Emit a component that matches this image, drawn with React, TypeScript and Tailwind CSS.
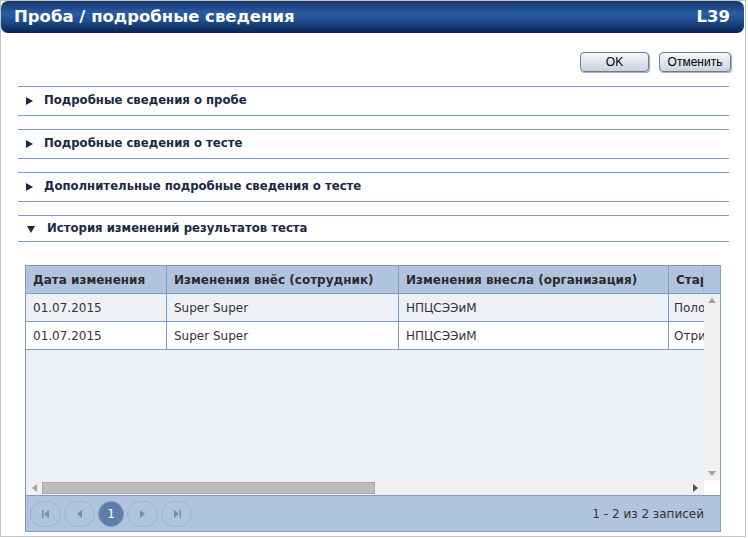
import type { ReactNode } from "react"

const sections = [
  { title: "Подробные сведения о пробе", open: false },
  { title: "Подробные сведения о тесте", open: false },
  { title: "Дополнительные подробные сведения о тесте", open: false },
  { title: "История изменений результатов теста", open: true },
]

const rows = [
  { date: "01.07.2015", user: "Super Super", org: "НПЦСЭЭиМ", old: "Положительный" },
  { date: "01.07.2015", user: "Super Super", org: "НПЦСЭЭиМ", old: "Отрицательный" },
]

function PagerButton({ children }: { children: ReactNode }) {
  return (
    <div className="w-[31px] h-[26px] rounded-full border border-[#9db3d3] flex items-center justify-center">
      {children}
    </div>
  )
}

function SectionHeader({ title, open }: { title: string; open: boolean }) {
  return (
    <div
      className={`ml-[17px] mr-[16px] border-y border-[#7f9cc9] flex items-center ${
        open ? "h-[27px]" : "h-[30px]"
      }`}
    >
      {open ? (
        <svg width="8" height="8" viewBox="0 0 8 8" className="ml-[9px] mr-[12px]">
          <path d="M0 1 L8 1 L4 8 Z" fill="#1c2640" />
        </svg>
      ) : (
        <svg width="7" height="8" viewBox="0 0 7 8" className="ml-[8px] mr-[11px]">
          <path d="M0 0 L7 4 L0 8 Z" fill="#1c2640" />
        </svg>
      )}
      <span className="text-[11.7px] font-bold text-[#1b2846]">{title}</span>
    </div>
  )
}

export default function App() {
  return (
    <div className="w-[748px] h-[538px] bg-white overflow-hidden" style={{ fontFamily: "'DejaVu Sans', Verdana, sans-serif" }}>
      <div className="w-[746px] h-[537px] border border-[#c4c4c4] flex flex-col">
        {/* title bar */}
        <div className="h-[32px] mr-[1px] rounded-[7px] bg-[linear-gradient(to_bottom,#15366c_0%,#2a5ca3_38%,#1f4d8e_62%,#0b2450_100%)] flex items-center justify-between px-[13px]">
          <span className="text-white font-bold text-[16.5px]">Проба / подробные сведения</span>
          <span className="text-white font-bold text-[16.5px] mr-[1px]">L39</span>
        </div>

        {/* buttons */}
        <div className="flex justify-end gap-[10px] pr-[14px] pt-[19px]" style={{ fontFamily: "'Liberation Sans', Arial, sans-serif" }}>
          <button className="w-[69px] h-[20px] rounded-[4px] border border-[#6f7c8e] bg-[linear-gradient(to_bottom,#f6f8fb_0%,#dde4ee_50%,#c9d3e1_100%)] shadow-[1px_1px_1px_rgba(0,0,0,0.35)] text-[12px] text-black">
            OK
          </button>
          <button className="w-[72px] h-[20px] rounded-[4px] border border-[#6f7c8e] bg-[linear-gradient(to_bottom,#f6f8fb_0%,#dde4ee_50%,#c9d3e1_100%)] shadow-[1px_1px_1px_rgba(0,0,0,0.35)] text-[12px] text-black">
            Отменить
          </button>
        </div>

        {/* sections */}
        <div className="mt-[14px] flex flex-col gap-[13px]">
          {sections.map((s) => (
            <SectionHeader key={s.title} title={s.title} open={s.open} />
          ))}
        </div>

        {/* grid */}
        <div className="mt-[23px] ml-[24px] w-[696px] h-[267px] border border-[#7f9cc9] flex flex-col overflow-hidden">
          {/* header */}
          <div className="h-[28px] bg-[#b0c4de] flex border-b border-[#7f9cc9] text-[12px] font-bold text-[#2b2b2b] shrink-0">
            <div className="w-[141px] shrink-0 border-r border-[#7f9cc9] px-[7px] flex items-center whitespace-nowrap">Дата изменения</div>
            <div className="w-[232px] shrink-0 border-r border-[#7f9cc9] px-[7px] flex items-center whitespace-nowrap">Изменения внёс (сотрудник)</div>
            <div className="w-[270px] shrink-0 border-r border-[#7f9cc9] px-[7px] flex items-center whitespace-nowrap">Изменения внесла (организация)</div>
            <div className="w-[35px] shrink-0 border-r border-[#9fb4d4] pl-[7px] flex items-center overflow-hidden whitespace-nowrap">Старое</div>
            <div className="flex-1" />
          </div>

          {/* body */}
          <div className="flex flex-1 min-h-0">
            <div className="flex-1 min-w-0 bg-[#edf1f6] flex flex-col overflow-hidden">
              {rows.map((r, i) => (
                <div
                  key={i}
                  className={`h-[28px] flex border-b border-[#7f9cc9] text-[12px] text-[#333] ${
                    i % 2 === 0 ? "bg-[#edf1f6]" : "bg-white"
                  }`}
                >
                  <div className="w-[141px] shrink-0 border-r border-[#7f9cc9] px-[7px] flex items-center">{r.date}</div>
                  <div className="w-[232px] shrink-0 border-r border-[#7f9cc9] px-[7px] flex items-center">{r.user}</div>
                  <div className="w-[270px] shrink-0 border-r border-[#7f9cc9] px-[7px] flex items-center">{r.org}</div>
                  <div className="flex-1 min-w-0 pl-[5px] flex items-center overflow-hidden whitespace-nowrap">{r.old}</div>
                </div>
              ))}
            </div>
            {/* vertical scrollbar */}
            <div className="w-[16px] shrink-0 bg-[#f0f0f0] flex flex-col items-center justify-between py-[4px]">
              <svg width="8" height="5" viewBox="0 0 8 5"><path d="M0 5 L4 0 L8 5 Z" fill="#a3a3a3" /></svg>
              <svg width="8" height="5" viewBox="0 0 8 5"><path d="M0 0 L8 0 L4 5 Z" fill="#a3a3a3" /></svg>
            </div>
          </div>

          {/* horizontal scrollbar */}
          <div className="h-[15px] flex shrink-0">
            <div className="flex-1 bg-[#f0f0f0] flex items-center">
              <svg width="5" height="8" viewBox="0 0 5 8" className="ml-[6px] mr-[5px]"><path d="M5 0 L0 4 L5 8 Z" fill="#a3a3a3" /></svg>
              <div className="w-[333px] h-[12px] bg-[#bcbcbc] border border-[#a9a9a9]" />
              <div className="flex-1" />
              <svg width="5" height="8" viewBox="0 0 5 8" className="mr-[6px]"><path d="M0 0 L5 4 L0 8 Z" fill="#505050" /></svg>
            </div>
            <div className="w-[16px] bg-white" />
          </div>

          {/* pager */}
          <div className="h-[36px] bg-[#b0c4de] border-t border-[#7f9cc9] flex items-center justify-between pl-[4px] pr-[16px] shrink-0">
            <div className="flex items-center gap-[3px]">
              <PagerButton>
                <svg width="8" height="8" viewBox="0 0 8 8"><rect x="0" y="0" width="1.5" height="8" fill="#7a8ba3" /><path d="M7 0 L2 4 L7 8 Z" fill="#7a8ba3" /></svg>
              </PagerButton>
              <PagerButton>
                <svg width="5" height="8" viewBox="0 0 5 8"><path d="M5 0 L0 4 L5 8 Z" fill="#7a8ba3" /></svg>
              </PagerButton>
              <div className="w-[26px] h-[26px] rounded-full bg-[#5e7fa9] border border-[#7e98bd] flex items-center justify-center text-white text-[12px]">
                1
              </div>
              <PagerButton>
                <svg width="5" height="8" viewBox="0 0 5 8"><path d="M0 0 L5 4 L0 8 Z" fill="#7a8ba3" /></svg>
              </PagerButton>
              <PagerButton>
                <svg width="8" height="8" viewBox="0 0 8 8"><path d="M1 0 L6 4 L1 8 Z" fill="#7a8ba3" /><rect x="6.5" y="0" width="1.5" height="8" fill="#7a8ba3" /></svg>
              </PagerButton>
            </div>
            <span className="text-[12px] text-[#333]">1 - 2 из 2 записей</span>
          </div>
        </div>
      </div>
    </div>
  )
}
